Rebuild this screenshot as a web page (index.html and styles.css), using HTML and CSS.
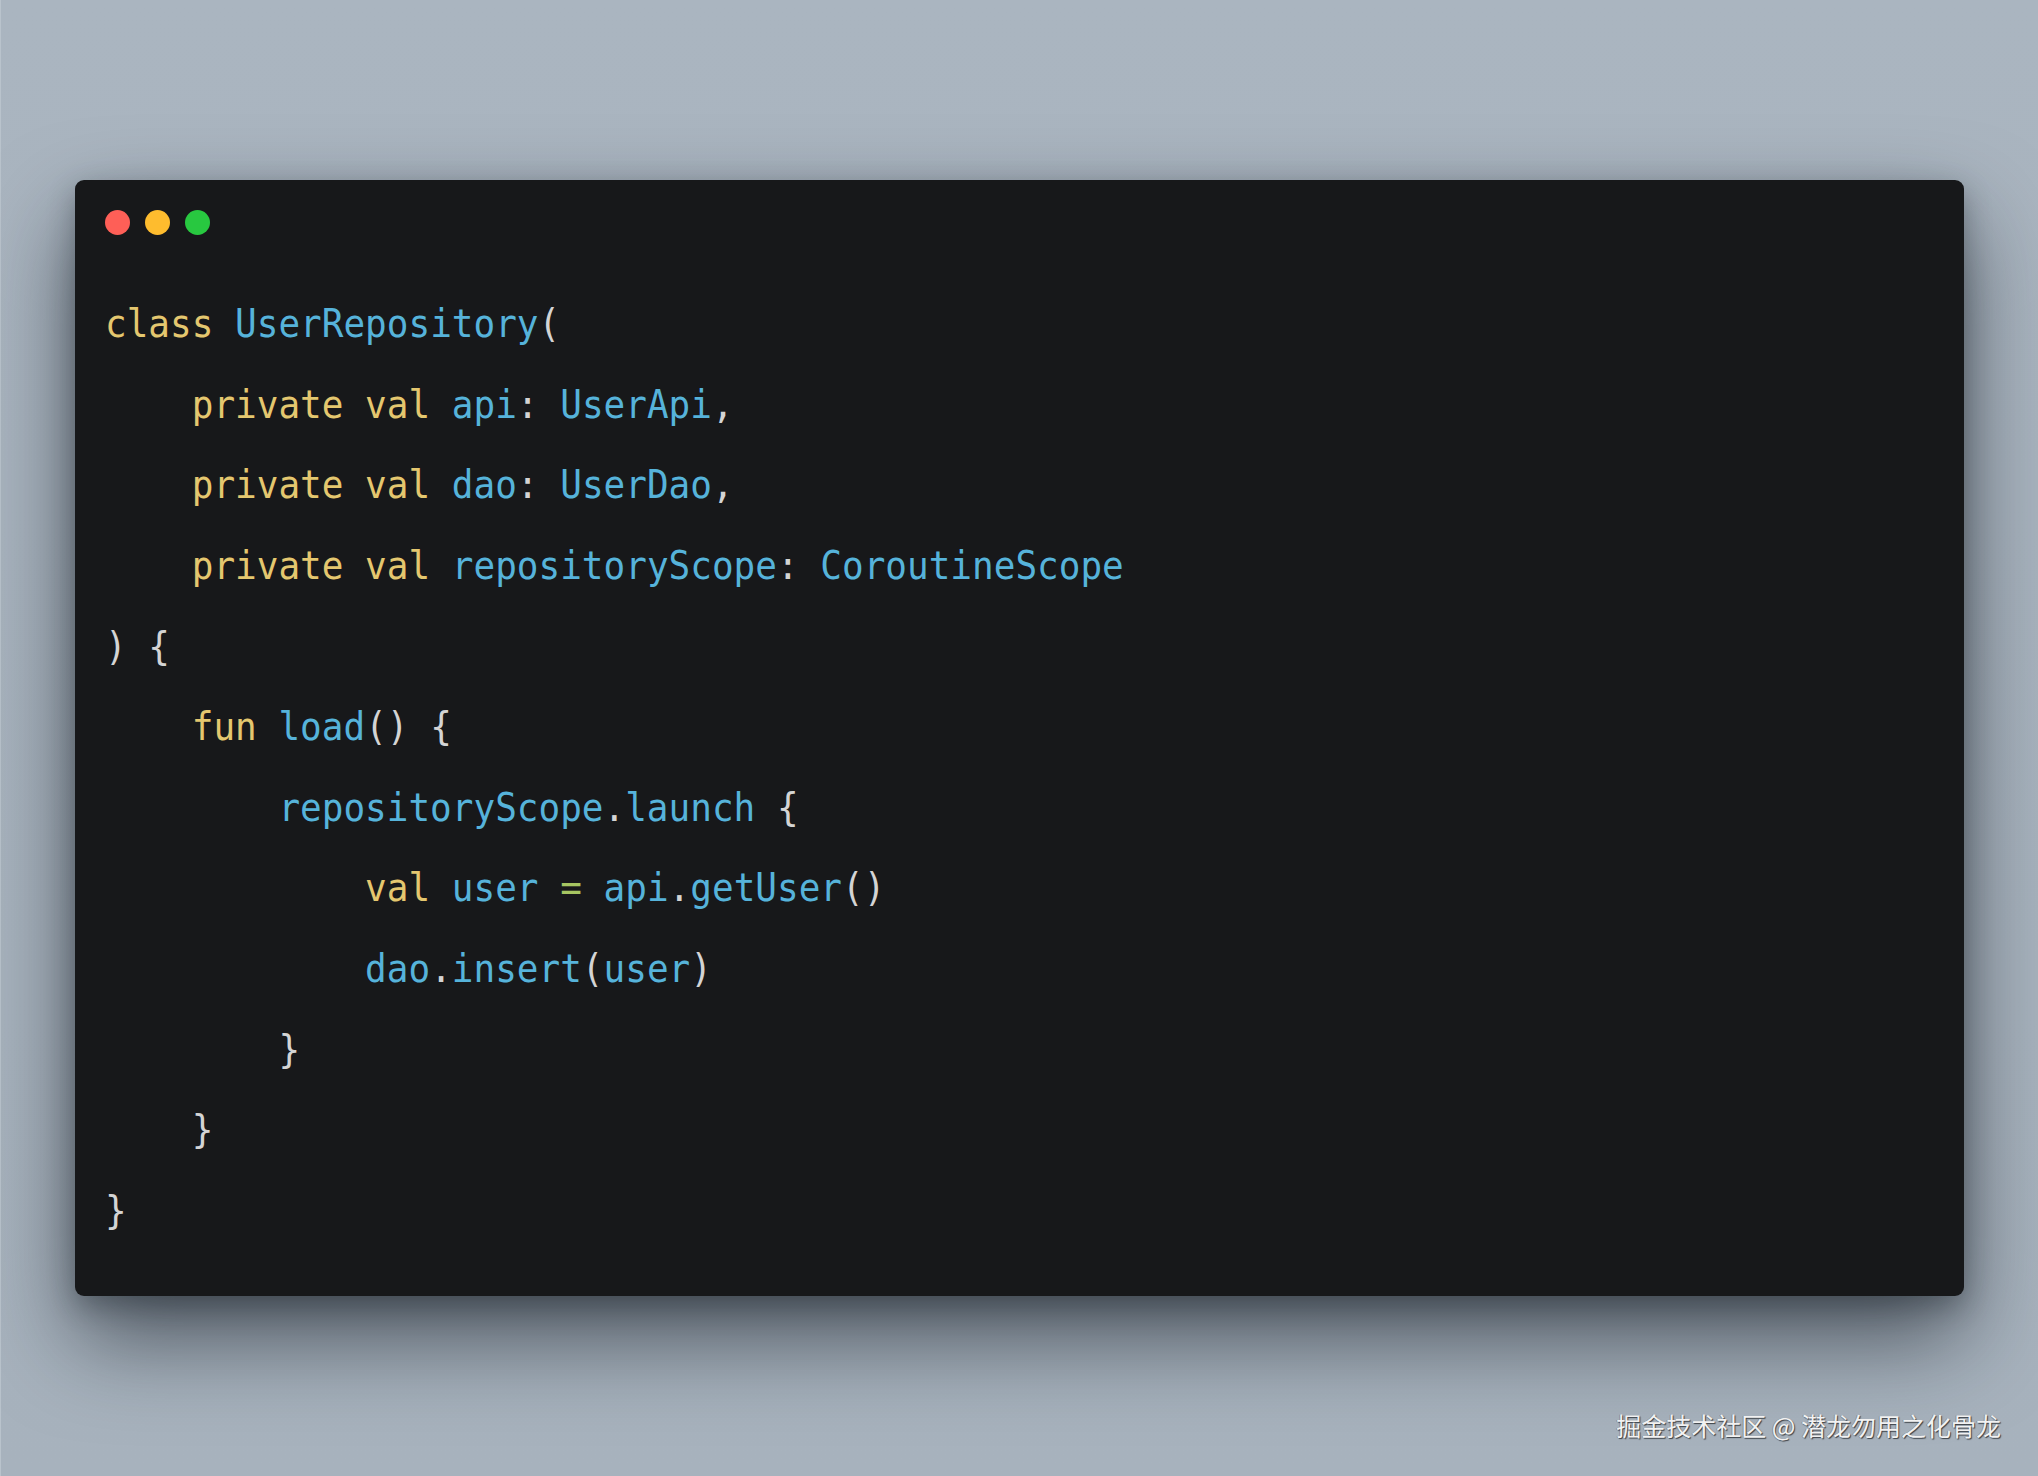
FILE: index.html
```html
<!DOCTYPE html>
<html lang="zh">
<head>
<meta charset="utf-8">
<title>UserRepository</title>
<link rel="stylesheet" href="styles.css">
</head>
<body>
<main class="stage">
  <section class="window">
    <div class="lights">
      <span class="light red"></span>
      <span class="light yellow"></span>
      <span class="light green"></span>
    </div>
    <div class="code">
      <div class="ln"><span class="kw">class</span> <span class="id">UserRepository</span><span class="p">(</span></div>
      <div class="ln">    <span class="kw">private</span> <span class="kw">val</span> <span class="id">api</span><span class="p">:</span> <span class="id">UserApi</span><span class="p">,</span></div>
      <div class="ln">    <span class="kw">private</span> <span class="kw">val</span> <span class="id">dao</span><span class="p">:</span> <span class="id">UserDao</span><span class="p">,</span></div>
      <div class="ln">    <span class="kw">private</span> <span class="kw">val</span> <span class="id">repositoryScope</span><span class="p">:</span> <span class="id">CoroutineScope</span></div>
      <div class="ln"><span class="p">) {</span></div>
      <div class="ln">    <span class="kw">fun</span> <span class="id">load</span><span class="p">() {</span></div>
      <div class="ln">        <span class="id">repositoryScope</span><span class="p">.</span><span class="id">launch</span> <span class="p">{</span></div>
      <div class="ln">            <span class="kw">val</span> <span class="id">user</span> <span class="op">=</span> <span class="id">api</span><span class="p">.</span><span class="id">getUser</span><span class="p">()</span></div>
      <div class="ln">            <span class="id">dao</span><span class="p">.</span><span class="id">insert</span><span class="p">(</span><span class="id">user</span><span class="p">)</span></div>
      <div class="ln">        <span class="p">}</span></div>
      <div class="ln">    <span class="p">}</span></div>
      <div class="ln"><span class="p">}</span></div>
    </div>
  </section>
  <div class="watermark">掘金技术社区 @ 潜龙勿用之化骨龙</div>
</main>
</body>
</html>
```

FILE: styles.css
```css
html, body {
  margin: 0;
  padding: 0;
}

body {
  width: 2038px;
  height: 1476px;
  overflow: hidden;
  background: linear-gradient(180deg, #aab5c0 0%, #a7b2bd 100%);
}

.stage {
  position: relative;
  box-sizing: border-box;
  width: 2038px;
  height: 1476px;
  padding: 180px 74px 0 74px;
  border-left: 1px solid #b9c3cc;
}

.window {
  box-sizing: border-box;
  height: 1116px;
  padding: 30px 30px 44px 30px;
  background: #17181a;
  border-radius: 9px;
  box-shadow: 0 42px 90px rgba(15, 22, 30, 0.6), 0 10px 28px rgba(15, 22, 30, 0.3);
}

.lights {
  display: flex;
  gap: 15px;
}

.light {
  width: 25px;
  height: 25px;
  border-radius: 50%;
}

.red { background: #fe5f57; }
.yellow { background: #febc2e; }
.green { background: #28c840; }

.code {
  margin-top: 49px;
  font-family: "DejaVu Sans Mono", "Liberation Mono", monospace;
  font-size: 36px;
  line-height: 80.65px;
  color: #d4d4d4;
}

.ln {
  height: 80.65px;
  white-space: pre;
  transform: scaleY(1.08);
}

.kw { color: #e4c76f; }
.id { color: #56b3da; }
.p { color: #d4d4d4; }
.op { color: #a6c561; }

.watermark {
  position: absolute;
  right: 37px;
  top: 1408px;
  font-family: "Noto Sans CJK SC", "Liberation Sans", sans-serif;
  font-size: 25px;
  line-height: 34px;
  color: #f2f2f2;
  text-shadow: 1px 1px 1px #3a3f45, -1px 0 0 rgba(60, 65, 70, 0.3);
}
```
